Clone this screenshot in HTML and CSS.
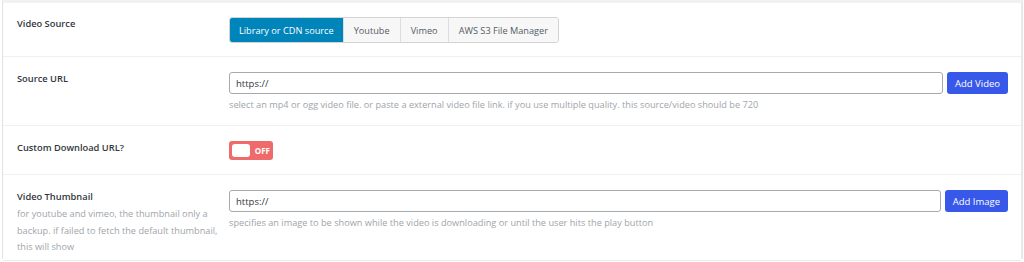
FILE: index.html
```html
<!DOCTYPE html>
<html>
<head>
<meta charset="utf-8">
<link rel="stylesheet" href="styles.css">
</head>
<body>
<div class="panel">
  <div class="row row-source">
    <div class="label"><div class="title">Video Source</div></div>
    <div class="field">
      <div class="seg">
        <span class="seg-btn active">Library or CDN source</span>
        <span class="seg-btn">Youtube</span>
        <span class="seg-btn">Vimeo</span>
        <span class="seg-btn">AWS S3 File Manager</span>
      </div>
    </div>
  </div>
  <div class="row row-url">
    <div class="label"><div class="title">Source URL</div></div>
    <div class="field">
      <div class="input-line">
        <div class="input">https://</div>
        <button class="btn">Add Video</button>
      </div>
      <div class="help">select an mp4 or ogg video file. or paste a external video file link. if you use multiple quality. this source/video should be 720</div>
    </div>
  </div>
  <div class="row row-dl">
    <div class="label"><div class="title">Custom Download URL?</div></div>
    <div class="field">
      <div class="toggle"><span class="knob"></span><span class="toggle-text">OFF</span></div>
    </div>
  </div>
  <div class="row row-thumb">
    <div class="label">
      <div class="title">Video Thumbnail</div>
      <div class="desc">for youtube and vimeo, the thumbnail only a backup. if failed to fetch the default thumbnail, this will show</div>
    </div>
    <div class="field">
      <div class="input-line">
        <div class="input">https://</div>
        <button class="btn">Add Image</button>
      </div>
      <div class="help">specifies an image to be shown while the video is downloading or until the user hits the play button</div>
    </div>
  </div>
</div>
</body>
</html>
```

FILE: styles.css
```css
html, body {
  margin: 0;
  padding: 0;
  background: #ffffff;
}
body {
  font-family: "Open Sans", "Noto Sans", "Liberation Sans", sans-serif;
  font-size: 9.2px;
  color: #32373c;
  width: 1024px;
  height: 262px;
  overflow: hidden;
}
.panel {
  margin: 0 1px 0 2px;
  border-top: 3px solid #f1f1f1;
  border-left: 1px solid #e2e2e2;
  border-right: 2px solid #e8e8e8;
  height: 259px;
  box-sizing: border-box;
}
.row {
  display: flex;
  border-bottom: 1px solid #f0f0f0;
  padding: 15px 13px 0 14px;
  box-sizing: border-box;
}
.row-source { height: 54px; padding-top: 13px; }
.row-url { height: 69px; }
.row-dl { height: 49px; }
.row-thumb { height: 86px; border-bottom: 1px solid #ececec; }
.label {
  width: 212px;
  flex: none;
}
.title {
  font-weight: 600;
  font-size: 9.3px;
  line-height: 13px;
  color: #32373c;
}
.row-source .title { padding-top: 1px; }
.desc {
  margin-top: 3px;
  color: #a0a5aa;
  font-size: 9.2px;
  line-height: 16.5px;
  width: 206px;
}
.field {
  flex: 1;
  min-width: 0;
}
.seg {
  display: inline-flex;
  height: 26px;
  margin-top: 1px;
  border: 1px solid #d4d4d4;
  border-radius: 3px;
  overflow: hidden;
  box-sizing: border-box;
}
.seg-btn {
  display: flex;
  align-items: center;
  padding: 0 10px;
  background: #f7f7f7;
  color: #555d66;
  border-left: 1px solid #dddddd;
  font-size: 9.2px;
}
.seg-btn:first-child { border-left: none; }
.seg-btn.active {
  background: #0085ba;
  color: #ffffff;
  padding: 0 9px;
}
.input-line {
  display: flex;
  gap: 4px;
  height: 22px;
}
.input {
  flex: 1;
  border: 1px solid #a7aaad;
  border-radius: 3px;
  box-sizing: border-box;
  display: flex;
  align-items: center;
  padding: 0 6px;
  color: #32373c;
  font-size: 9.5px;
}
.btn {
  background: #3858e9;
  color: #ffffff;
  border: none;
  border-radius: 3px;
  font-family: inherit;
  font-size: 9.5px;
  padding: 0 8px;
  height: 22px;
}
.help {
  margin-top: 4px;
  color: #a0a5aa;
  font-size: 9.2px;
  line-height: 14px;
}
.toggle {
  display: inline-flex;
  align-items: center;
  width: 44px;
  height: 19px;
  background: #ef6b6b;
  border-radius: 3px;
  box-sizing: border-box;
  padding: 0 3px;
}
.knob {
  width: 18px;
  height: 13px;
  background: #ffffff;
  border-radius: 3px;
}
.toggle-text {
  color: #ffffff;
  font-weight: 700;
  font-size: 8px;
  margin-left: 5px;
}
```
